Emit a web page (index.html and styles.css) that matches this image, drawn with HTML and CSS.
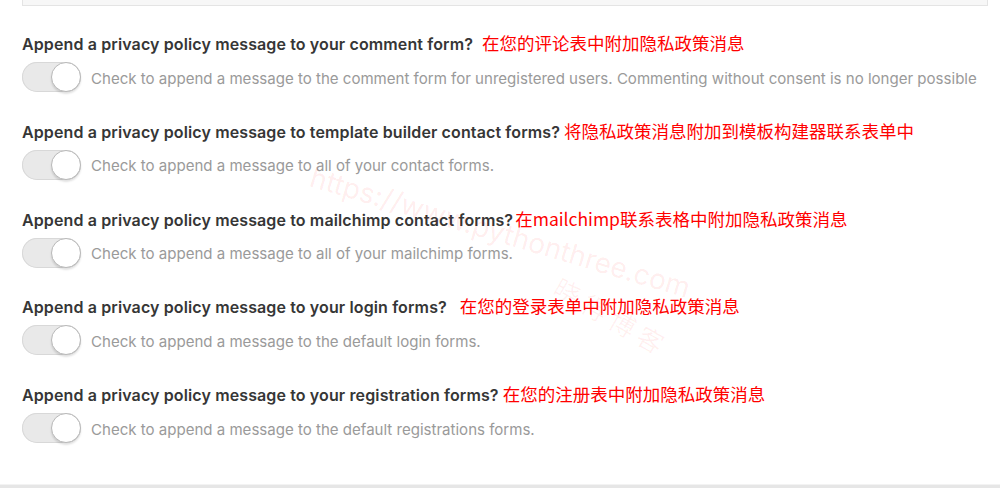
FILE: index.html
```html
<!DOCTYPE html>
<html lang="zh-CN">
<head>
<meta charset="UTF-8" />
<meta name="viewport" content="width=device-width, initial-scale=1" />
<title>Privacy settings</title>
<link rel="stylesheet" href="styles.css">
</head>
<body>
  <div class="top-box"></div>

  <div class="options">
    <div class="option">
      <h3>Append a privacy policy message to your comment form?<span class="note gap-9">在您的评论表中附加隐私政策消息</span></h3>
      <label class="switch-row">
        <span class="switch"><span class="knob"></span></span>
        <span class="desc">Check to append a message to the comment form for unregistered users. Commenting without consent is no longer possible</span>
      </label>
    </div>

    <div class="option">
      <h3>Append a privacy policy message to template builder contact forms?<span class="note gap-4">将隐私政策消息附加到模板构建器联系表单中</span></h3>
      <label class="switch-row">
        <span class="switch"><span class="knob"></span></span>
        <span class="desc">Check to append a message to all of your contact forms.</span>
      </label>
    </div>

    <div class="option">
      <h3>Append a privacy policy message to mailchimp contact forms?<span class="note gap-2">在mailchimp联系表格中附加隐私政策消息</span></h3>
      <label class="switch-row">
        <span class="switch"><span class="knob"></span></span>
        <span class="desc">Check to append a message to all of your mailchimp forms.</span>
      </label>
    </div>

    <div class="option">
      <h3>Append a privacy policy message to your login forms?<span class="note gap-13">在您的登录表单中附加隐私政策消息</span></h3>
      <label class="switch-row">
        <span class="switch"><span class="knob"></span></span>
        <span class="desc">Check to append a message to the default login forms.</span>
      </label>
    </div>

    <div class="option">
      <h3>Append a privacy policy message to your registration forms?<span class="note gap-4">在您的注册表中附加隐私政策消息</span></h3>
      <label class="switch-row">
        <span class="switch"><span class="knob"></span></span>
        <span class="desc">Check to append a message to the default registrations forms.</span>
      </label>
    </div>
  </div>

  <div class="footer-line"></div>

  <div class="watermark">https://www.pythonthree.com</div>
  <div class="watermark-cn">晓得博客</div>
</body>
</html>
```

FILE: styles.css
```css
:root {
  --color-text: #363636;
  --color-muted: #9a9a9a;
  --color-red: #ff0000;
  --color-line: #e4e4e4;
}
html, body {
  height: 100%;
}
body {
  margin: 0;
  font-family: Inter, 'Liberation Sans', 'Noto Sans CJK SC', sans-serif;
  background: #fff;
  color: var(--color-text);
  position: relative;
  overflow: hidden;
}
.top-box {
  margin: 0 12px 0 22px;
  height: 5px;
  background: #f7f7f7;
  border: 1px solid var(--color-line);
  border-top: none;
}
.options {
  padding: 26px 0 0 22px;
  display: flex;
  flex-direction: column;
  gap: 27.75px;
}
.option h3 {
  margin: 0;
  height: 24px;
  font-size: 16px;
  line-height: 24px;
  font-weight: 600;
  letter-spacing: 0.12px;
  white-space: nowrap;
}
.note {
  color: var(--color-red);
  font-family: 'Noto Sans CJK SC', sans-serif;
  font-weight: 400;
  font-size: 17.5px;
  line-height: 1;
  letter-spacing: 0;
}
.gap-2 { margin-left: 2px; }
.gap-4 { margin-left: 4px; }
.gap-9 { margin-left: 9px; }
.gap-13 { margin-left: 13px; }
.switch-row {
  display: flex;
  align-items: center;
  gap: 10px;
  margin-top: 6px;
}
.switch {
  position: relative;
  width: 59px;
  height: 30px;
  border-radius: 15px;
  background: #e9e9e9;
  box-shadow: inset 0 0 0 1px #d8d8d8;
  flex-shrink: 0;
}
.knob {
  position: absolute;
  right: 0;
  top: 0;
  width: 28px;
  height: 28px;
  border-radius: 50%;
  background: #fff;
  border: 1px solid #b9b9b9;
  box-shadow: 0 2px 2px rgba(0, 0, 0, 0.12);
}
.desc {
  color: var(--color-muted);
  font-size: 15.05px;
  padding-top: 2px;
  white-space: nowrap;
}
.footer-line {
  position: absolute;
  left: 0;
  right: 0;
  bottom: 0;
  height: 3px;
  background: #e6e6e6;
  border-top: 1px solid #f3f3f3;
}
.watermark {
  position: absolute;
  left: 316px;
  top: 160px;
  font-size: 28px;
  color: rgba(255, 0, 0, 0.08);
  transform: rotate(16.5deg);
  transform-origin: left top;
  pointer-events: none;
  white-space: nowrap;
}
.watermark-cn {
  position: absolute;
  left: 566px;
  top: 268px;
  font-family: 'Noto Sans CJK SC', sans-serif;
  font-size: 26px;
  letter-spacing: 6px;
  color: rgba(255, 0, 0, 0.06);
  transform: rotate(30deg);
  transform-origin: left top;
  pointer-events: none;
  white-space: nowrap;
}
```
